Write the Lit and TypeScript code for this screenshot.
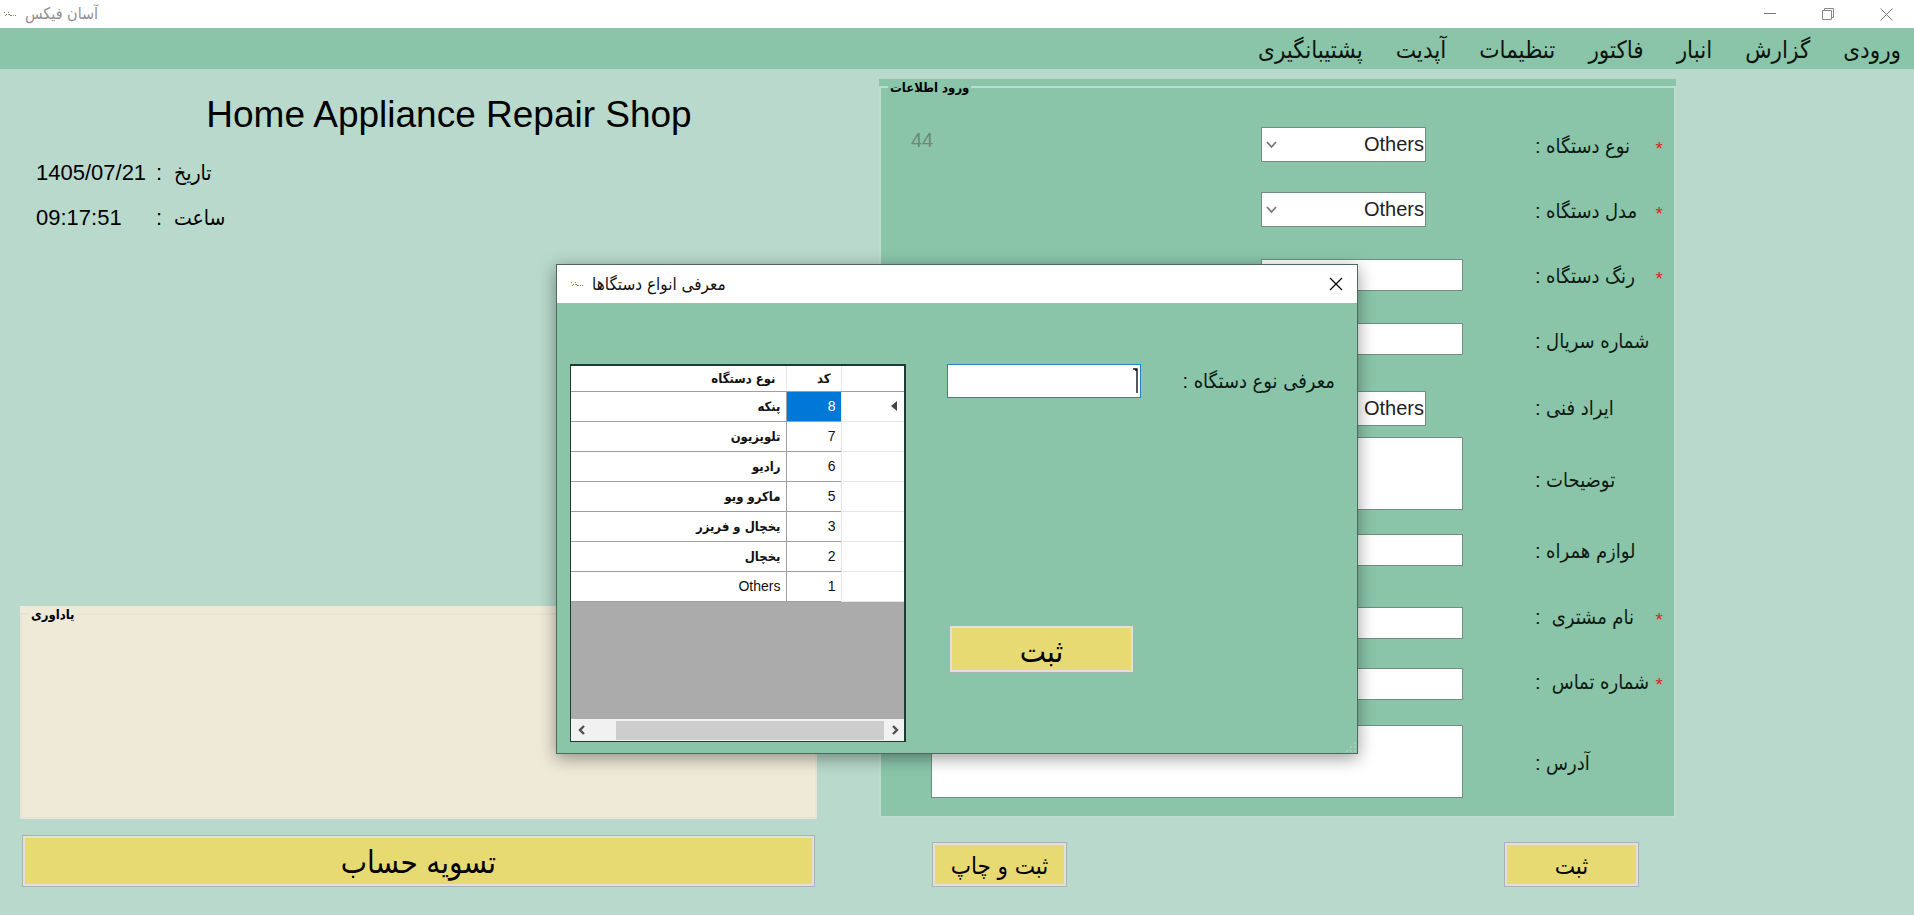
import { LitElement, html, css, svg } from "lit";
import { customElement, property } from "lit/decorators.js";

type Field = {
  id: string;
  label: string;
  kind: "combo" | "text" | "area";
  required?: boolean;
};

const FIELDS: Field[] = [
  { id: "type", label: "نوع دستگاه :", kind: "combo", required: true },
  { id: "model", label: "مدل دستگاه :", kind: "combo", required: true },
  { id: "color", label: "رنگ دستگاه :", kind: "text", required: true },
  { id: "serial", label: "شماره سریال :", kind: "text" },
  { id: "fault", label: "ایراد فنی :", kind: "combo" },
  { id: "notes", label: "توضیحات :", kind: "area" },
  { id: "extras", label: "لوازم همراه :", kind: "text" },
  { id: "customer", label: "نام مشتری  :", kind: "text", required: true },
  { id: "phone", label: "شماره تماس  :", kind: "text", required: true },
  { id: "address", label: "آدرس :", kind: "area" },
];

const MENU = ["ورودی", "گزارش", "انبار", "فاکتور", "تنظیمات", "آپدیت", "پشتیبانگیری"];

const DEVICES: [number, string][] = [
  [8, "پنکه"],
  [7, "تلویزیون"],
  [6, "رادیو"],
  [5, "ماکرو ویو"],
  [3, "یخچال و فریزر"],
  [2, "یخچال"],
  [1, "Others"],
];

const appIcon = html`<svg width="14" height="14" viewBox="0 0 14 14" aria-hidden="true">
  ${svg`<g fill="#8a7a55"><rect x="1" y="5" width="1" height="1"/><rect x="3" y="7" width="1" height="1"/><rect x="5" y="5" width="1" height="1"/><rect x="6" y="7" width="1" height="1"/><rect x="7" y="8" width="2" height="1"/><rect x="10" y="8" width="1" height="1"/><rect x="12" y="8" width="1" height="1"/></g><rect x="5" y="7" width="1" height="1" fill="#c8a040"/><rect x="2" y="8" width="1" height="1" fill="#7090a0"/>`}
</svg>`;

const sharedStyles = css`
  :host {
    --green: #8ac5a9;
    --pale: #b8d9cb;
    --ui: "Liberation Sans", "DejaVu Sans Condensed", "DejaVu Sans", sans-serif;
    --fa: "DejaVu Sans Condensed", "DejaVu Sans", "Liberation Sans", sans-serif;
  }
  * {
    box-sizing: border-box;
  }
  .push {
    border: 1px solid #a9b3b3;
    background: #e8da72;
    box-shadow: inset 0 0 0 2px #e1e0da;
    color: #000;
    font-family: var(--ui);
    font-size: 24px;
    padding: 2px 0 0;
    border-radius: 0;
  }
  .box {
    display: block;
    border: 1px solid #6f8f80;
    border-radius: 0;
    background: #fff;
    font: 20px var(--ui);
    padding: 0 2px;
    margin: 0;
    outline: none;
    resize: none;
    overflow: hidden;
  }
`;

@customElement("device-dialog")
export class DeviceDialog extends LitElement {
  static styles = [
    sharedStyles,
    css`
      :host {
        display: block;
        width: 802px;
        max-width: 100%;
        border: 1px solid #4b6a5b;
        background: var(--green);
        box-shadow: 0 4px 16px rgba(0, 0, 0, 0.4);
      }
      .bar {
        display: flex;
        align-items: center;
        height: 38px;
        padding: 0 14px 0 13px;
        background: #fff;
        gap: 8px;
      }
      .title {
        flex: 1;
        font: 17px/24px var(--fa);
        color: #111;
        margin: 0;
      }
      .close {
        border: 0;
        background: none;
        padding: 0;
        display: flex;
      }
      .body {
        position: relative;
        display: flex;
        align-items: flex-start;
        gap: 41px;
        padding: 61px 22px 11px 13px;
      }
      .sheet {
        display: flex;
        flex-direction: column;
        width: 336px;
        height: 378px;
        border: 2px solid #1d3b31;
        border-width: 2px 2px 1px 1px;
        background: #ababab;
      }
      table {
        width: 100%;
        border-collapse: collapse;
        table-layout: fixed;
        background: #fff;
        font-family: var(--fa);
        font-size: 13px;
        color: #111;
      }
      th,
      td {
        padding: 0 5px;
        height: 30px;
        text-align: right;
        border-bottom: 1px solid #9f9f9f;
        border-left: 1px solid #9f9f9f;
      }
      thead th {
        height: 25px;
        padding: 0 10px;
        border-left-color: #e6e6e6;
      }
      td {
        font-weight: bold;
      }
      td:last-child,
      th:last-child {
        border-left: 0;
      }
      .latin {
        font-family: "Liberation Sans", sans-serif;
        font-size: 14px;
        font-weight: normal;
      }
      tbody th {
        border-color: #e6e6e6;
      }
      .marker {
        width: 63px;
      }
      .code {
        width: 55px;
      }
      .picked {
        background: #0078d7;
        color: #fff;
      }
      .arrow {
        display: block;
      }
      .scroll {
        display: flex;
        align-items: center;
        height: 22px;
        margin-top: auto;
        background: #f1f1f1;
        padding: 0 4px 0 6px;
      }
      .thumb {
        flex: 1;
        height: 19px;
        background: #cdcdcd;
        margin: 1px 6px 0 29px;
      }
      .entry {
        flex: 1;
        display: flex;
        flex-direction: column;
        gap: 227px;
      }
      .line {
        display: flex;
        justify-content: space-between;
        align-items: center;
      }
      .name {
        position: relative;
      }
      .name .box {
        width: 194px;
        height: 34px;
        border-color: #2585c4;
      }
      .caret {
        position: absolute;
        right: 2px;
        top: 4px;
      }
      label {
        font: 20px/24px var(--ui);
        direction: rtl;
        color: #0c1a13;
      }
      .push {
        width: 185px;
        height: 48px;
        margin-left: 2px;
        padding-top: 6px;
        font-size: 31px;
        line-height: 36px;
      }
      .grip {
        position: absolute;
        right: 0;
        bottom: 0;
      }
    `,
  ];

  render() {
    return html`
      <div class="bar">
        ${appIcon}
        <h2 class="title">معرفی انواع دستگاها</h2>
        <button class="close" aria-label="بستن">
          <svg width="14" height="14" viewBox="0 0 14 14">
            <path d="M1 1L13 13M13 1L1 13" stroke="#000" stroke-width="1.2" />
          </svg>
        </button>
      </div>
      <div class="body">
        <div class="sheet">
          <table dir="rtl">
            <thead>
              <tr>
                <th class="marker"></th>
                <th class="code">کد</th>
                <th>نوع دستگاه</th>
              </tr>
            </thead>
            <tbody>
              ${DEVICES.map(
                ([code, name], i) => html`<tr>
                  <th>
                    ${i === 0
                      ? html`<svg class="arrow" width="10" height="12" viewBox="0 0 10 12">
                          <path d="M8 1V11L2 6Z" fill="#444" />
                        </svg>`
                      : ""}
                  </th>
                  <td class="latin ${i === 0 ? "picked" : ""}">${code}</td>
                  <td class=${name === "Others" ? "latin" : ""}>${name}</td>
                </tr>`
              )}
            </tbody>
          </table>
          <div class="scroll">
            <svg width="10" height="12" viewBox="0 0 10 12">
              <path d="M7 2L3 6L7 10" fill="none" stroke="#505050" stroke-width="2.4" />
            </svg>
            <div class="thumb"></div>
            <svg width="10" height="12" viewBox="0 0 10 12">
              <path d="M3 2L7 6L3 10" fill="none" stroke="#505050" stroke-width="2.4" />
            </svg>
          </div>
        </div>
        <div class="entry">
          <div class="line">
            <div class="name">
              <input id="device-name" class="box" dir="rtl" type="text" />
              <svg class="caret" width="6" height="25" viewBox="0 0 6 25">
                <path d="M3 1H4V25M0 1H4M2 2H4" fill="none" stroke="#111" stroke-width="1.4" />
              </svg>
            </div>
            <label for="device-name">معرفی نوع دستگاه :</label>
          </div>
          <button class="push">ثبت</button>
        </div>
        <svg class="grip" width="12" height="12" viewBox="0 0 12 12">
          <path
            d="M9 1h2v2h-2zM5 5h2v2h-2zM9 5h2v2h-2zM1 9h2v2h-2zM5 9h2v2h-2zM9 9h2v2h-2z"
            fill="#a9c9b9"
          />
        </svg>
      </div>
    `;
  }
}

@customElement("app-root")
export class AppRoot extends LitElement {
  @property() date = "1405/07/21";
  @property() time = "09:17:51";

  static styles = [
    sharedStyles,
    css`
      :host {
        display: flex;
        flex-direction: column;
        position: relative;
        min-height: 100vh;
        background: var(--pale);
        color: #000;
        font-family: var(--ui);
      }
      .titlebar {
        display: flex;
        align-items: center;
        height: 28px;
        padding: 0 21px 0 3px;
        gap: 8px;
        background: #fff;
        color: #8f8f8f;
      }
      .apptitle {
        flex: 1;
        font: 16px/24px var(--fa);
      }
      .controls {
        display: flex;
        gap: 45px;
      }
      .controls button {
        border: 0;
        background: none;
        padding: 0;
        display: flex;
      }
      .menu {
        display: flex;
        direction: rtl;
        align-items: center;
        gap: 33px;
        height: 41px;
        padding: 2px 13px 0;
        background: var(--green);
      }
      .menu a {
        color: #0b1510;
        text-decoration: none;
        font-size: 24px;
        line-height: 32px;
      }
      .main {
        flex: 1;
        display: grid;
        grid-template-columns: minmax(0, 1fr) minmax(0, 1fr);
        gap: 62px;
        padding: 10px 238px 28px 20px;
      }
      .left,
      .right {
        display: flex;
        flex-direction: column;
      }
      h1 {
        margin: 14px 0 0;
        padding-left: 61px;
        width: 100%;
        text-align: center;
        font-weight: normal;
        font-size: 37px;
        line-height: 44px;
      }
      .clock {
        display: grid;
        grid-template-columns: 120px 18px auto;
        justify-content: start;
        row-gap: 17px;
        margin: 22px 0 0 16px;
        font-size: 22px;
        line-height: 28px;
      }
      .clock .fa {
        font-size: 21px;
      }
      .group {
        position: relative;
        padding-top: 7px;
        background: var(--green);
      }
      .frame {
        border: 2px solid #bfdccf;
      }
      .legend {
        position: absolute;
        left: 9px;
        top: 1px;
        margin: 0;
        padding: 0 2px;
        font: bold 13px/16px var(--fa);
        background: inherit;
      }
      .reminder {
        margin-top: auto;
        height: 213px;
        background: #efe9d8;
      }
      .reminder .frame {
        height: 100%;
        border-color: #e7e4d5;
      }
      .settle {
        height: 52px;
        margin: 16px 2px 0;
        font-size: 31px;
      }
      .form {
        display: flex;
        direction: rtl;
        gap: 72px;
        padding: 39px 11px 18px 30px;
      }
      .labels {
        display: grid;
        grid-template-rows: 65px 65px 65px 67px 72px 71px 66px 65px 81px 24px;
        width: 128px;
        padding-top: 7px;
      }
      .caption {
        display: flex;
        align-items: flex-start;
        height: 24px;
      }
      .caption label {
        margin-right: auto;
        font-size: 20px;
        line-height: 24px;
        white-space: pre;
        color: #0c1a13;
      }
      .star {
        color: #e02020;
        font-size: 19px;
        line-height: 30px;
      }
      .fields {
        flex: 1;
        display: grid;
        grid-template-rows: 65px 67px 64px 68px 46px 97px 73px 61px 57px 73px;
      }
      .row {
        display: flex;
        align-items: flex-start;
      }
      .row .box {
        width: 202px;
        height: 32px;
      }
      .row .area {
        flex: 1;
        height: 73px;
        margin-left: 20px;
      }
      .combo {
        position: relative;
        margin-right: 37px;
      }
      .row .combo .box {
        appearance: none;
        width: 165px;
        height: 35px;
        padding: 0 1px 2px;
        color: #222;
      }
      .chev {
        position: absolute;
        left: 5px;
        top: 14px;
        pointer-events: none;
      }
      .count {
        margin-right: auto;
        font-size: 20px;
        line-height: 26px;
        color: #6a897b;
      }
      .actions {
        display: flex;
        direction: rtl;
        justify-content: space-between;
        margin-top: auto;
        padding: 0 37px 0 53px;
      }
      .actions .push {
        width: 135px;
        height: 45px;
      }
      .overlay {
        position: absolute;
        inset: 264px 0 auto 0;
        display: flex;
        justify-content: center;
      }
    `,
  ];

  private control(f: Field) {
    if (f.kind === "combo")
      return html`<div class="combo">
        <select class="box" id=${f.id} dir="rtl">
          <option>Others</option>
        </select>
        <svg class="chev" width="11" height="8" viewBox="0 0 11 8">
          <path d="M1 1L5.5 6L10 1" fill="none" stroke="#777" stroke-width="1.8" />
        </svg>
      </div>`;
    if (f.kind === "area") return html`<textarea class="box area" id=${f.id}></textarea>`;
    return html`<input class="box" id=${f.id} type="text" />`;
  }

  render() {
    return html`
      <header class="titlebar">
        ${appIcon}
        <span class="apptitle">آسان فیکس</span>
        <div class="controls">
          <button aria-label="کوچک کردن">
            <svg width="13" height="13" viewBox="0 0 13 13">
              <path d="M0 5.500H12" stroke="#777" />
            </svg>
          </button>
          <button aria-label="بازگردانی">
            <svg width="13" height="13" viewBox="0 0 13 13">
              <path d="M0.500 2.500H9.500V11.500H0.500ZM2.500 2.500V0.500H11.500V9.500H9.500" fill="none" stroke="#888" />
            </svg>
          </button>
          <button aria-label="بستن">
            <svg width="13" height="13" viewBox="0 0 13 13">
              <path d="M0.500 0.500L12.500 12.500M12.500 0.500L0.500 12.500" stroke="#777" />
            </svg>
          </button>
        </div>
      </header>
      <nav class="menu">${MENU.map((m) => html`<a href="#">${m}</a>`)}</nav>
      <main class="main">
        <div class="left">
          <h1>Home Appliance Repair Shop</h1>
          <div class="clock">
            <span>${this.date}</span><span>:</span><span class="fa">تاریخ</span>
            <span>${this.time}</span><span>:</span><span class="fa">ساعت</span>
          </div>
          <section class="group reminder">
            <h2 class="legend">یاداوری</h2>
            <div class="frame"></div>
          </section>
          <button class="push settle">تسویه حساب</button>
        </div>
        <div class="right">
          <section class="group">
            <h2 class="legend">ورود اطلاعات</h2>
            <div class="frame">
              <div class="form">
                <div class="labels">
                  ${FIELDS.map(
                    (f) => html`<div class="caption">
                      ${f.required ? html`<span class="star">*</span>` : ""}
                      <label for=${f.id}>${f.label}</label>
                    </div>`
                  )}
                </div>
                <div class="fields">
                  ${FIELDS.map(
                    (f, i) => html`<div class="row">
                      ${this.control(f)} ${i === 0 ? html`<span class="count">44</span>` : ""}
                    </div>`
                  )}
                </div>
              </div>
            </div>
          </section>
          <div class="actions">
            <button class="push">ثبت</button>
            <button class="push">ثبت و چاپ</button>
          </div>
        </div>
      </main>
      <div class="overlay"><device-dialog></device-dialog></div>
    `;
  }
}
